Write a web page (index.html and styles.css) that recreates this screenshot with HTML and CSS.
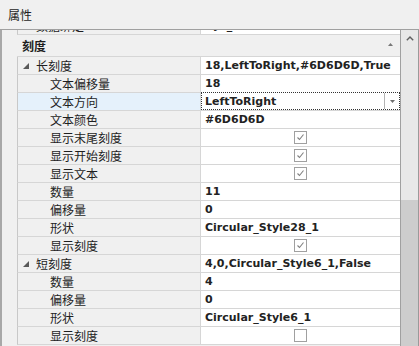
FILE: index.html
```html
<!DOCTYPE html>
<html>
<head>
  <title>属性</title>
  <link rel="stylesheet" href="styles.css">
</head>
<body>
  <div class="title">属性</div>

  <div class="panel">
    <div class="list">
      <div class="row cut">
        <div class="gutter"></div>
        <div class="cells">
          <div class="name lv1"><svg class="tri" width="6" height="7" viewBox="0 0 6 7"><polygon points="0.5,0.5 4.5,3.5 0.5,6.5" fill="none" stroke="#555"/></svg>数据绑定</div>
          <div class="value">Sys_Max</div>
        </div>
      </div>

      <div class="row category">
        <div class="gutter"></div>
        <div class="cells">
          <span class="cat-label">刻度</span>
          <svg class="fold" width="5" height="3" viewBox="0 0 5 3"><polygon points="2.5,0 5,3 0,3" fill="#777"/></svg>
        </div>
      </div>

      <div class="row">
        <div class="gutter"></div>
        <div class="cells">
          <div class="name lv1"><svg class="tri" width="6" height="6" viewBox="0 0 6 6"><polygon points="6,0 6,6 0,6" fill="#595959"/></svg>长刻度</div>
          <div class="value">18,LeftToRight,#6D6D6D,True</div>
        </div>
      </div>
      <div class="row">
        <div class="gutter"></div>
        <div class="cells">
          <div class="name lv2">文本偏移量</div>
          <div class="value">18</div>
        </div>
      </div>
      <div class="row selected">
        <div class="gutter"></div>
        <div class="cells">
          <div class="name lv2">文本方向</div>
          <div class="value combo">
            <span class="combo-text">LeftToRight</span>
            <div class="drop"><svg width="5" height="3" viewBox="0 0 5 3"><polygon points="0,0 5,0 2.5,3" fill="#6d6d6d"/></svg></div>
          </div>
        </div>
      </div>
      <div class="row">
        <div class="gutter"></div>
        <div class="cells">
          <div class="name lv2">文本颜色</div>
          <div class="value">#6D6D6D</div>
        </div>
      </div>
      <div class="row">
        <div class="gutter"></div>
        <div class="cells">
          <div class="name lv2">显示末尾刻度</div>
          <div class="value center"><span class="check"><svg width="11" height="11" viewBox="0 0 11 11"><polyline points="2.5,5.5 4.5,7.5 8.5,2.5" fill="none" stroke="#808080" stroke-width="1.1"/></svg></span></div>
        </div>
      </div>
      <div class="row">
        <div class="gutter"></div>
        <div class="cells">
          <div class="name lv2">显示开始刻度</div>
          <div class="value center"><span class="check"><svg width="11" height="11" viewBox="0 0 11 11"><polyline points="2.5,5.5 4.5,7.5 8.5,2.5" fill="none" stroke="#808080" stroke-width="1.1"/></svg></span></div>
        </div>
      </div>
      <div class="row">
        <div class="gutter"></div>
        <div class="cells">
          <div class="name lv2">显示文本</div>
          <div class="value center"><span class="check"><svg width="11" height="11" viewBox="0 0 11 11"><polyline points="2.5,5.5 4.5,7.5 8.5,2.5" fill="none" stroke="#808080" stroke-width="1.1"/></svg></span></div>
        </div>
      </div>
      <div class="row">
        <div class="gutter"></div>
        <div class="cells">
          <div class="name lv2">数量</div>
          <div class="value">11</div>
        </div>
      </div>
      <div class="row">
        <div class="gutter"></div>
        <div class="cells">
          <div class="name lv2">偏移量</div>
          <div class="value">0</div>
        </div>
      </div>
      <div class="row">
        <div class="gutter"></div>
        <div class="cells">
          <div class="name lv2">形状</div>
          <div class="value">Circular_Style28_1</div>
        </div>
      </div>
      <div class="row">
        <div class="gutter"></div>
        <div class="cells">
          <div class="name lv2">显示刻度</div>
          <div class="value center"><span class="check"><svg width="11" height="11" viewBox="0 0 11 11"><polyline points="2.5,5.5 4.5,7.5 8.5,2.5" fill="none" stroke="#808080" stroke-width="1.1"/></svg></span></div>
        </div>
      </div>

      <div class="row">
        <div class="gutter"></div>
        <div class="cells">
          <div class="name lv1"><svg class="tri" width="6" height="6" viewBox="0 0 6 6"><polygon points="6,0 6,6 0,6" fill="#595959"/></svg>短刻度</div>
          <div class="value">4,0,Circular_Style6_1,False</div>
        </div>
      </div>
      <div class="row">
        <div class="gutter"></div>
        <div class="cells">
          <div class="name lv2">数量</div>
          <div class="value">4</div>
        </div>
      </div>
      <div class="row">
        <div class="gutter"></div>
        <div class="cells">
          <div class="name lv2">偏移量</div>
          <div class="value">0</div>
        </div>
      </div>
      <div class="row">
        <div class="gutter"></div>
        <div class="cells">
          <div class="name lv2">形状</div>
          <div class="value">Circular_Style6_1</div>
        </div>
      </div>
      <div class="row">
        <div class="gutter"></div>
        <div class="cells">
          <div class="name lv2">显示刻度</div>
          <div class="value center"><span class="check"></span></div>
        </div>
      </div>
    </div>

    <div class="scroll">
      <div class="up"><svg width="8" height="5" viewBox="0 0 8 5"><polyline points="0.8,4.2 4,1 7.2,4.2" fill="none" stroke="#606060" stroke-width="1.4"/></svg></div>
      <div class="track"><div class="thumb"></div></div>
    </div>
  </div>
</body>
</html>
```

FILE: styles.css
```css
body {
  margin: 0;
  background-color: #f0f0f0;
  font-family: "Noto Sans CJK SC", sans-serif;
  font-size: 12px;
  color: #1e1e1e;
}
.title {
  height: 29px;
  line-height: 29px;
  padding-left: 8px;
  border-bottom: 1px solid #a0a0a0;
}
.panel {
  display: flex;
  height: 316px;
  overflow: hidden;
  border-left: 2px solid #a8a8a8;
}
.list {
  flex: 1;
  overflow: hidden;
  border-right: 1px solid #a0a0a0;
}
.row {
  display: flex;
  height: 18px;
}
.row.cut {
  margin-top: -13px;
}
.gutter {
  width: 15px;
  flex: none;
}
.cells {
  flex: 1;
  display: flex;
  border-left: 1px solid #c8c8c8;
  border-bottom: 1px solid #d6d6d6;
}
.name {
  box-sizing: border-box;
  width: 183px;
  flex: none;
  display: flex;
  align-items: center;
  border-right: 1px solid #d6d6d6;
  line-height: 17px;
  white-space: nowrap;
}
.lv1 {
  padding-left: 5px;
}
.lv2 {
  padding-left: 32px;
}
.tri {
  margin-right: 7px;
}
.selected .name {
  background-color: #e5f1fb;
}
.value {
  flex: 1;
  display: flex;
  align-items: center;
  padding-left: 4px;
  background-color: #fff;
  font-family: "DejaVu Sans", sans-serif;
  font-weight: bold;
  font-size: 11px;
  color: #222;
  white-space: nowrap;
  overflow: hidden;
}
.value.center {
  justify-content: center;
  padding-left: 0;
}
.check {
  box-sizing: border-box;
  width: 13px;
  height: 13px;
  border: 1px solid #a0a0a0;
  background-color: #fff;
  display: flex;
}
.category {
  height: 22px;
}
.category .cells {
  border-left: none;
  align-items: center;
}
.cat-label {
  padding-left: 5px;
  font-weight: bold;
}
.fold {
  margin-left: auto;
  margin-right: 7px;
  margin-top: -2px;
}
.combo {
  margin-top: -1px;
  padding-left: 3px;
  border: 1px dotted #333;
}
.combo-text {
  flex: 1;
}
.drop {
  width: 14px;
  align-self: stretch;
  display: flex;
  align-items: center;
  justify-content: center;
  border-left: 1px solid #b4b4b4;
}
.scroll {
  width: 17px;
  flex: none;
  display: flex;
  flex-direction: column;
  background-color: #e8e8e8;
  border-right: 1px solid #9a9a9a;
}
.up {
  height: 17px;
  display: flex;
  justify-content: center;
  padding-top: 6px;
  box-sizing: border-box;
}
.track {
  flex: 1;
  display: flex;
  flex-direction: column;
}
.thumb {
  flex: 1;
  margin-top: 153px;
  background-color: #cdcdcd;
}
```
